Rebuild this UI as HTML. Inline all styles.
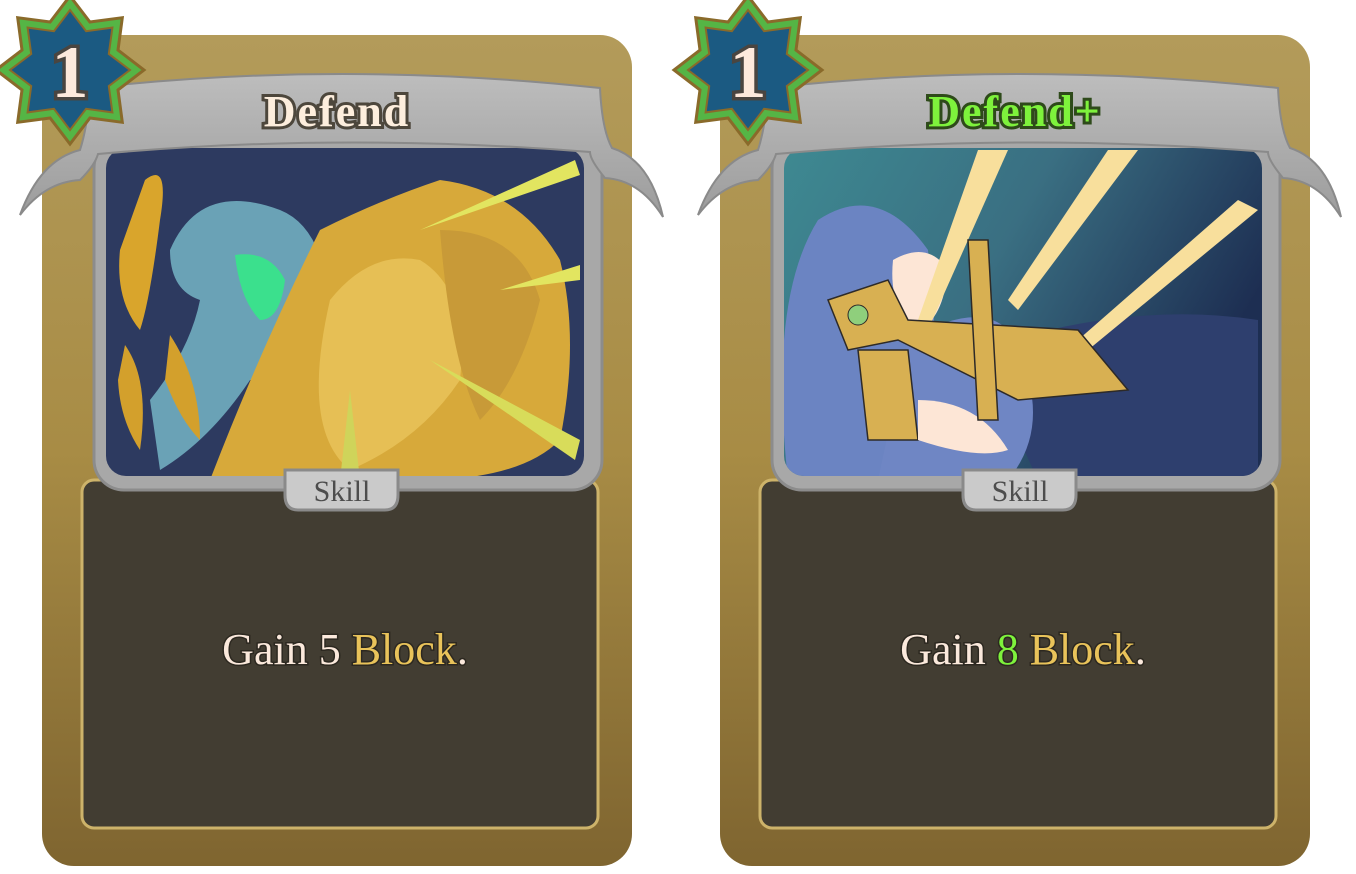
<!DOCTYPE html>
<html><head><meta charset="utf-8"><style>
html,body{margin:0;padding:0;background:#fff;width:1356px;height:874px;overflow:hidden}
svg{position:absolute;left:0;top:0}
text{font-family:"Liberation Serif",serif}
</style></head><body>
<svg width="1356" height="874" viewBox="0 0 1356 874">
<defs>
<linearGradient id="gold" x1="0" y1="0" x2="0" y2="1">
<stop offset="0" stop-color="#b39b5a"/><stop offset="0.5" stop-color="#a88c45"/><stop offset="1" stop-color="#7f6530"/></linearGradient>
<linearGradient id="ban" x1="0" y1="0" x2="0" y2="1">
<stop offset="0" stop-color="#bdbdbd"/><stop offset="1" stop-color="#9c9c9c"/></linearGradient>
<linearGradient id="sky2" x1="0" y1="0" x2="1" y2="0.4">
<stop offset="0" stop-color="#3e8a92"/><stop offset="0.5" stop-color="#3a6f82"/><stop offset="1" stop-color="#1d2e52"/></linearGradient>
<g id="frame">
<rect x="42" y="35" width="590" height="831" rx="32" fill="url(#gold)"/>
<rect x="82" y="480" width="516" height="348" rx="12" fill="#423d32" stroke="#cdb36a" stroke-width="3"/>
<rect x="94" y="138" width="508" height="352" rx="30" fill="#a8a8a8" stroke="#8c8c8c" stroke-width="3"/>
</g>
<g id="banner">
<path d="M20 215 Q40 160 80 150 Q88 125 90 88 Q340 60 600 88 Q602 130 612 148 Q650 160 663 217 Q640 180 605 178 Q590 160 590 152 Q340 132 98 154 Q95 165 80 180 Q45 182 20 215 Z" fill="url(#ban)" stroke="#8a8a8a" stroke-width="2"/>
</g>
<g id="star">
<polygon points="70,-4 89.9,22 122.3,17.7 118,50.1 144,70 118,89.9 122.3,122.3 89.9,118 70,144 50.1,118 17.7,122.3 22,89.9 -4,70 22,50.1 17.7,17.7 50.1,22" fill="#55b545" stroke="#8a6a2a" stroke-width="3"/>
<polygon points="70,10 86.1,31.2 112.4,27.6 108.8,53.9 130,70 108.8,86.1 112.4,112.4 86.1,108.8 70,130 53.9,108.8 27.6,112.4 31.2,86.1 10,70 31.2,53.9 27.6,27.6 53.9,31.2" fill="#1b5a82" stroke="#8a6a2a" stroke-width="2"/>
<text x="70" y="97" text-anchor="middle" font-size="74" font-weight="bold" fill="#fde9dc" stroke="#4a4540" stroke-width="7" paint-order="stroke">1</text>
</g>
<g id="tab">
<path d="M285 470 H398 V495 Q398 510 385 510 H298 Q285 510 285 495 Z" fill="#cacaca" stroke="#8a8a8a" stroke-width="3"/>
<text x="342" y="501" text-anchor="middle" font-size="30" fill="#4d4d4d">Skill</text>
</g>
</defs>

<!-- Card 1 -->
<use href="#frame"/>
<clipPath id="c1"><rect x="106" y="148" width="478" height="328" rx="20"/></clipPath>
<g clip-path="url(#c1)">
<rect x="100" y="140" width="490" height="340" fill="#2d3a60"/>
<path d="M170 250 Q200 180 280 210 Q330 230 330 330 Q300 380 250 380 Q210 440 160 470 L150 400 Q190 350 200 300 Q170 290 170 250Z" fill="#6aa2b6"/>
<path d="M235 255 Q270 250 285 280 Q280 320 260 320 Q240 300 235 255Z" fill="#3be08d"/>
<path d="M145 180 Q170 160 160 220 Q150 300 140 330 Q115 300 120 250 Z" fill="#d9a52c"/>
<path d="M125 345 Q150 380 140 450 Q120 420 118 380 Z" fill="#d3a02c"/>
<path d="M170 335 Q200 380 200 440 Q180 420 165 380 Z" fill="#d3a02c"/>
<path d="M210 480 Q260 350 320 230 Q380 200 440 180 Q520 190 560 260 Q580 340 560 440 Q520 480 420 480 Z" fill="#d7a93a"/>
<path d="M330 300 Q370 250 420 260 Q470 290 460 380 Q420 440 350 470 Q300 430 330 300Z" fill="#e6bf55"/>
<path d="M440 230 Q520 230 540 300 Q520 380 480 420 Q450 360 440 230Z" fill="#c89a38"/>
<path d="M420 230 L575 160 L580 175 Z" fill="#e2e560"/>
<path d="M500 290 L580 265 L580 280 Z" fill="#e2e560"/>
<path d="M430 360 L580 440 L575 460 Z" fill="#d8dc5a"/>
<path d="M350 390 L360 480 L340 480 Z" fill="#cfd45a"/>
</g>
<use href="#banner"/>
<text x="337" y="126" text-anchor="middle" font-size="44" font-weight="bold" letter-spacing="2" fill="#fdeedd" stroke="#4d473c" stroke-width="6" paint-order="stroke">Defend</text>
<use href="#tab"/>
<text x="345" y="664" text-anchor="middle" font-size="44" fill="#fbe9dc" style="paint-order:stroke" stroke="#2c2820" stroke-width="3">Gain 5 <tspan fill="#e9c35a">Block</tspan>.</text>
<use href="#star"/>

<!-- Card 2 -->
<g transform="translate(678,0)">
<use href="#frame"/>
<clipPath id="c2"><rect x="106" y="148" width="478" height="328" rx="20"/></clipPath>
<g clip-path="url(#c2)">
<rect x="100" y="140" width="490" height="340" fill="url(#sky2)"/>
<path d="M110 480 Q90 300 140 220 Q200 180 250 250 L270 480 Z" fill="#6b84c2"/>
<path d="M300 350 Q450 300 580 320 L580 480 L360 480 Z" fill="#2e3f6e"/>
<path d="M230 340 Q300 300 330 330 Q380 420 330 480 L200 480 Z" fill="#6f86c4"/>
<path d="M215 260 Q250 240 270 270 Q265 320 240 330 Q210 310 215 260Z" fill="#fde6d6"/>
<path d="M300 150 L330 150 L250 330 L240 320 Z" fill="#f8df9c"/>
<path d="M430 150 L460 150 L340 310 L330 300 Z" fill="#f8df9c"/>
<path d="M560 200 L580 210 L410 350 L400 340 Z" fill="#f8df9c"/>
<path d="M150 300 L210 280 L230 320 L400 330 L450 390 L340 400 L220 340 L170 350 Z" fill="#d8b052" stroke="#2d2a28" stroke-width="1.5"/>
<path d="M180 350 L230 350 L240 440 L190 440 Z" fill="#d8b052" stroke="#2d2a28" stroke-width="1.5"/>
<circle cx="180" cy="315" r="10" fill="#8fcf7c" stroke="#2d2a28"/>
<path d="M240 400 Q300 400 330 450 Q300 460 240 440 Z" fill="#fde6d6"/>
<path d="M290 240 L310 240 L320 420 L300 420 Z" fill="#d8b052" stroke="#2d2a28" stroke-width="1.5"/>
</g>
<use href="#banner"/>
<text x="337" y="126" text-anchor="middle" font-size="44" font-weight="bold" letter-spacing="2" fill="#7ef23c" stroke="#2e4a1a" stroke-width="6" paint-order="stroke">Defend+</text>
<use href="#tab"/>
<text x="345" y="664" text-anchor="middle" font-size="44" fill="#fbe9dc" style="paint-order:stroke" stroke="#2c2820" stroke-width="3">Gain <tspan fill="#7ef23c">8</tspan> <tspan fill="#e9c35a">Block</tspan>.</text>
<use href="#star"/>
</g>
</svg>
</body></html>
